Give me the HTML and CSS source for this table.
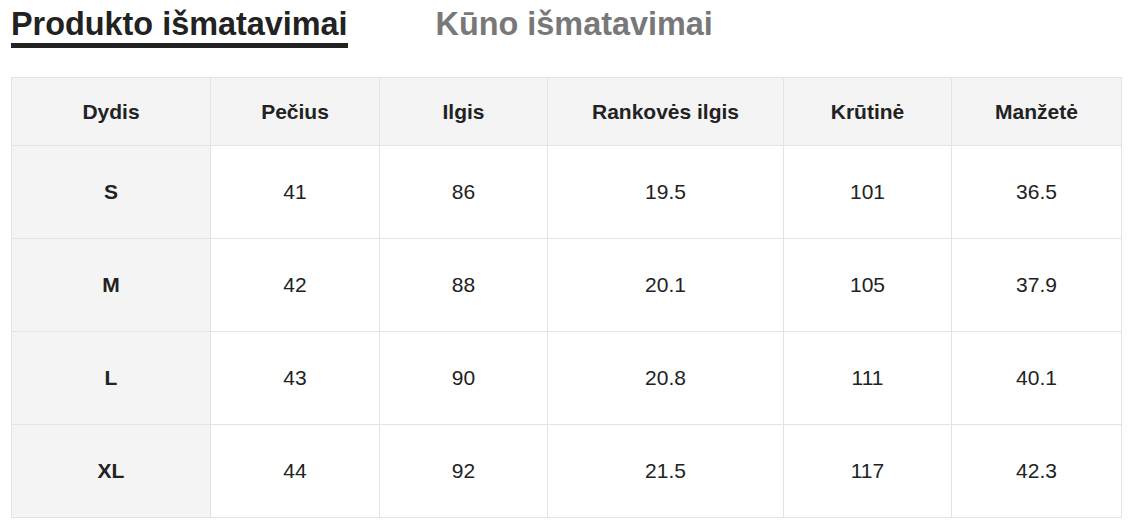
FILE: index.html
```html
<!DOCTYPE html>
<html lang="lt">
<head>
<meta charset="utf-8">
<title>Išmatavimai</title>
<link rel="stylesheet" href="styles.css">
</head>
<body>
<div class="page">
  <div class="tabs">
    <div class="tab active">Produkto išmatavimai</div>
    <div class="tab">Kūno išmatavimai</div>
  </div>
  <table class="sizes">
    <colgroup>
      <col class="c1"><col class="c2"><col class="c3"><col class="c4"><col class="c5"><col class="c6">
    </colgroup>
    <thead>
      <tr><th>Dydis</th><th>Pečius</th><th>Ilgis</th><th>Rankovės ilgis</th><th>Krūtinė</th><th>Manžetė</th></tr>
    </thead>
    <tbody>
      <tr><th>S</th><td>41</td><td>86</td><td>19.5</td><td>101</td><td>36.5</td></tr>
      <tr><th>M</th><td>42</td><td>88</td><td>20.1</td><td>105</td><td>37.9</td></tr>
      <tr><th>L</th><td>43</td><td>90</td><td>20.8</td><td>111</td><td>40.1</td></tr>
      <tr><th>XL</th><td>44</td><td>92</td><td>21.5</td><td>117</td><td>42.3</td></tr>
    </tbody>
  </table>
</div>
</body>
</html>
```

FILE: styles.css
```css
html, body {
  margin: 0;
  padding: 0;
  background: #fff;
}
body {
  font-family: "Liberation Sans", Arial, sans-serif;
  color: #222;
}
.page {
  padding: 6px 0 0 11px;
}
.tabs {
  display: flex;
  align-items: flex-start;
  gap: 88px;
}
.tab {
  font-size: 32.4px;
  font-weight: bold;
  line-height: 37px;
  color: #787878;
  border-bottom: 5px solid transparent;
}
.tab.active {
  color: #222;
  border-bottom-color: #222;
}
.sizes {
  margin-top: 29px;
  border-collapse: collapse;
  table-layout: fixed;
  width: 1110px;
  font-size: 21px;
}
.c1 { width: 199px; }
.c2 { width: 169px; }
.c3 { width: 168px; }
.c4 { width: 236px; }
.c5 { width: 168px; }
.c6 { width: 170px; }
.sizes th, .sizes td {
  border: 1px solid #e3e3e3;
  text-align: center;
  vertical-align: middle;
  padding: 0;
  color: #222;
}
.sizes thead th {
  background: #f4f4f4;
  height: 67px;
  font-weight: bold;
}
.sizes tbody th {
  background: #f4f4f4;
  font-weight: bold;
}
.sizes tbody th, .sizes tbody td {
  height: 92px;
}
.sizes td {
  font-weight: normal;
}
```
